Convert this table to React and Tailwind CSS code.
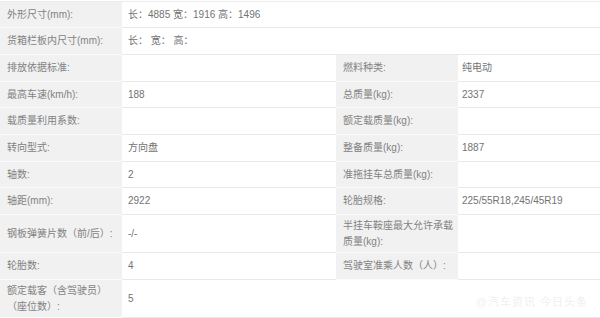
import React from 'react';

const rows = [
  { h: 'h-[26px]', full: true, label: '外形尺寸(mm):', value: '长：4885 宽：1916 高：1496' },
  { h: 'h-[27px]', full: true, label: '货箱栏板内尺寸(mm):', value: '长：  宽：  高：' },
  { h: 'h-[27px]', label: '排放依据标准:', value: '', label2: '燃料种类:', value2: '纯电动' },
  { h: 'h-[26px]', label: '最高车速(km/h):', value: '188', label2: '总质量(kg):', value2: '2337' },
  { h: 'h-[27px]', label: '载质量利用系数:', value: '', label2: '额定载质量(kg):', value2: '' },
  { h: 'h-[27px]', label: '转向型式:', value: '方向盘', label2: '整备质量(kg):', value2: '1887' },
  { h: 'h-[26px]', label: '轴数:', value: '2', label2: '准拖挂车总质量(kg):', value2: '' },
  { h: 'h-[27px]', label: '轴距(mm):', value: '2922', label2: '轮胎规格:', value2: '225/55R18,245/45R19' },
  { h: 'h-[38px]', label: '钢板弹簧片数（前/后）:', value: '-/-', label2: '半挂车鞍座最大允许承载质量(kg):', value2: '' },
  { h: 'h-[27px]', label: '轮胎数:', value: '4', label2: '驾驶室准乘人数（人）:', value2: '' },
  { h: 'h-[38px]', full: true, label: '额定载客（含驾驶员）（座位数）:', value: '5', mark: true },
];

function Label({ children, className = '' }) {
  return (
    <div className={`flex items-center bg-[#f1f1f1] border-b border-[#fbfbfb] pl-[7px] pr-[3px] leading-[16px] text-[#828282] ${className}`}>
      <span>{children}</span>
    </div>
  );
}

function Value({ children, className = '' }) {
  return (
    <div className={`flex items-center bg-white border-b border-[#e9e9e9] leading-[16px] text-[#737373] ${className}`}>
      <span>{children}</span>
    </div>
  );
}

export default function App() {
  return (
    <div
      className="w-[600px] h-[318px] overflow-hidden bg-white pt-[1px] text-[10px]"
      style={{ fontFamily: '"Liberation Sans", "Noto Sans CJK SC", sans-serif' }}
    >
      <div className="border-t border-[#ececec]">
        {rows.map((r, i) => (
          <div key={i} className={`grid grid-cols-[122px_214px_122px_142px] ${r.h}`}>
            <Label className={i === 8 ? 'whitespace-nowrap' : ''}>{r.label}</Label>
            {r.full ? (
              <Value className="col-span-3 pl-[6px] relative">
                {r.value}
                {r.mark && (
                  <span className="absolute right-[12px] bottom-[7px] text-[11px] text-[#f0f0f0] tracking-[1px]">
                    @汽车资讯 今日头条
                  </span>
                )}
              </Value>
            ) : (
              <>
                <Value className="pl-[6px]">{r.value}</Value>
                <Label className="pl-[6px]">{r.label2}</Label>
                <Value className="pl-[4px]">{r.value2}</Value>
              </>
            )}
          </div>
        ))}
      </div>
    </div>
  );
}
